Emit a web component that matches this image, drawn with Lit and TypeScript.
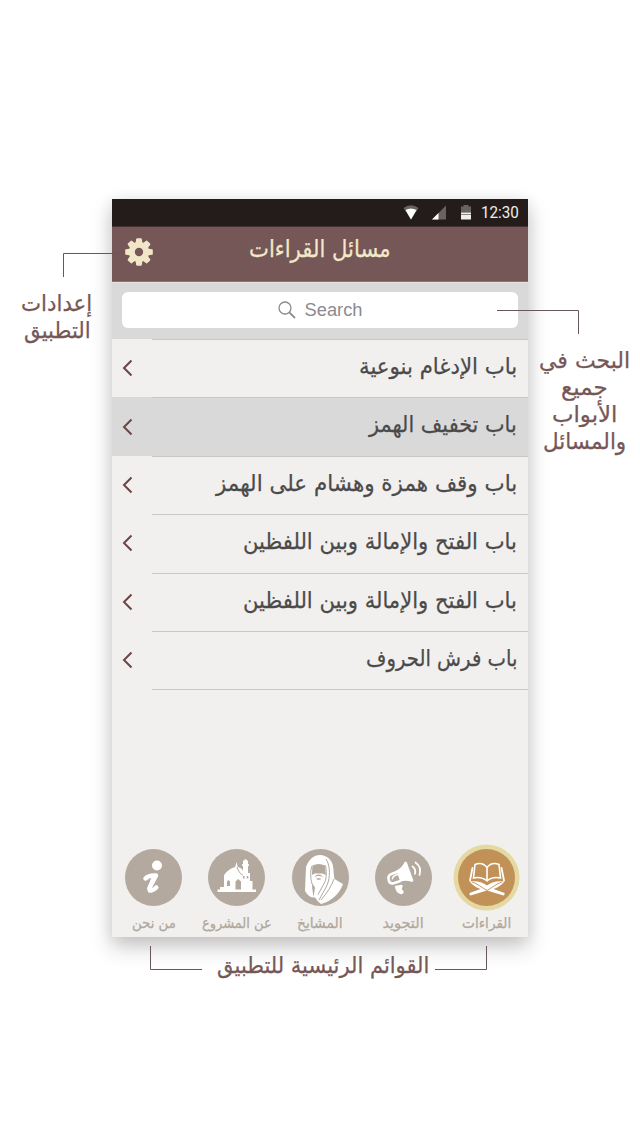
import { LitElement, html, css, svg } from "lit";
import { customElement, property } from "lit/decorators.js";
import { classMap } from "lit/directives/class-map.js";

/** One line of Arabic text condensed horizontally to a given width. */
@customElement("fit-label")
class FitLabel extends LitElement {
  @property({ type: Number }) w = 100;
  @property() text = "";

  static styles = css`
    :host { display: block; direction: rtl; white-space: nowrap; text-align: right; }
    .line { display: inline-block; transform-origin: 100% 50%; }
  `;

  updated() {
    const line = this.renderRoot.querySelector(".line") as HTMLElement;
    this.style.width = `${this.w}px`;
    line.style.transform = `scaleX(${this.w / (line.offsetWidth || this.w)})`;
  }

  render() {
    return html`<span class="line">${this.text}</span>`;
  }
}

const rows = [
  { text: "باب الإدغام بنوعية", w: 158 },
  { text: "باب تخفيف الهمز", w: 148, active: true },
  { text: "باب وقف همزة وهشام على الهمز", w: 301 },
  { text: "باب الفتح والإمالة وبين اللفظين", w: 274 },
  { text: "باب الفتح والإمالة وبين اللفظين", w: 274 },
  { text: "باب فرش الحروف", w: 151 },
];

const icons = {
  info: svg`
    <circle cx="32" cy="16.500" r="5"/>
    <path class="fat" d="M20.500 29.500c2.500-2.500 5.500-3.500 10.500-3l-5.500 10.500c-1.600 3-1.200 4.800.8 4.500 2-.3 3.500-1.500 5-3"/>
    <path d="M27 27l6-1-6 12-5 2z"/>`,
  mosque: svg`
    <path d="M9.500 40.500h38.500v2.500H9.500zM12 38h32v3H12z"/>
    <path d="M16 38.500V26.500c2-4 7-7.500 11.200-8.500l1.300-5 1.300 5c4 1 6 4 6.200 7v13.500z"/>
    <path d="M35 25v-8h-1v-1.800h1V12l2.500-2 2.500 2v3.200h1V17h-1v7h2v8h2.500v8H32V25z"/>
    <path class="cut" d="M27.500 40.500v-8l2.500-2.500 3 2.500v8zM19 37v-4.500l1.500-1.500 1.500 1.500V37zM35 27h1.600v2.500H35zM38.700 27h1.600v2.500h-1.600z"/>
    <path class="cutline" d="M29 18c1 4 3 6.500 6 8.500"/>`,
  sheikh: svg`
    <path d="M13 42l1-24C17 10 22 6 28 6c7 0 12 5 13 11 .8 5 .6 9 1.500 13l8.500 5c-3 9-11 17-22 20-3-2-4-4-6-6.500-4 .5-7-1.500-10-6.500z"/>
    <path class="cut" d="M20.500 16.500c4-2 8.500-2 12.500 0l.8 9.500-3.300-1.500h-7.500L19.800 26z"/>
    <path class="cut" d="M22.500 28.500c1.200-4 7.200-4 8.500 0-1.500-1.200-2.500-1.500-4.200-1.500s-2.800.3-4.300 1.500z"/>
    <path class="cut" d="M24.500 29.200h4.500l-.8 1.600h-3z"/>
    <path class="cut" d="M20 34l3 4.500-1.500 9.500-1.300-9z"/>
    <path class="cutline" d="M20 17c-2 5-1.500 12 0 18M33.500 16.500c1.500 8 1 15-2.500 20l-5 9M34 10c4 6 4 15 2.500 22-2 7-6 12-9.500 19M42 30c-3 8-7 14-13 21"/>`,
  horn: svg`
    <path d="M21.500 21.500c3.500-1.500 6-4.500 8-8.200.7-1.200 2-1 2.400.2l6.300 17.500c.4 1.400-.6 2.200-2 1.700-3.500-1.400-7-1.500-11 .1z"/>
    <path class="stroke3" d="M23 22.500l-7 2.700c-4.500 2.300-2.500 10.300 2.500 9l7-2.200"/>
    <path class="stroke2" d="M17.500 29.500c0-2 2-3 5-4"/>
    <path d="M19.800 37l6.500-1.200c1.200 0 1.700 1 1.200 2l-.8 2.200 2 2.500c.2 2.300-2.200 3.200-4.200 2.300-2.500-1.200-4.200-3.800-4.700-7.800z"/>
    <path class="stroke2" d="M37.500 17.500c2.500 1.800 3.200 4.500 2.400 7.300M40.500 13.500c4 2.800 5.500 7.500 4 12.500"/>`,
  quran: svg`
    <path class="stroke15" d="M29 18.500c-3.500-4.500-8.500-4.500-12-3L15.500 29c5-1 9.500-.5 13.500 3 4-3.500 8.500-4 13.500-3L41 15.500c-3.500-1.500-8.500-1.500-12 3zM29 18.500v13"/>
    <path class="stroke2" d="M14.500 19l-2.500 12.500M43.500 19l2.500 12.500"/>
    <path d="M11.500 32.500c6-1 13 0 17.500 4 4.500-4 11.500-5 17.500-4-3 3.500-6.500 6-11 7.500l11 4v1.800l-1 .7L29 41.500l-16.500 5-1-.7V44l11-4c-4.500-1.500-8-4-11-7.500z"/>
    <path class="thincut" d="M14 33c6 2 9 5 15 8.500M44 33c-6 2-9 5-15 8.500"/>`,
};

const tabs = [
  { text: "من نحن", w: 44, icon: icons.info },
  { text: "عن المشروع", w: 70, icon: icons.mosque },
  { text: "المشايخ", w: 46, icon: icons.sheikh },
  { text: "التجويد", w: 41, icon: icons.horn },
  { text: "القراءات", w: 49, icon: icons.quran, active: true },
];

@customElement("app-root")
class AppRoot extends LitElement {
  static styles = css`
    :host {
      display: block; position: relative; width: 640px; height: 1136px; overflow: hidden;
      background: #fff; font-family: "DejaVu Sans", sans-serif; color: #765757;
    }
    fit-label { -webkit-text-stroke: 0.25px currentColor; }
    .board { display: grid; grid-template-columns: 112px 416px 112px; padding-top: 199px; }
    .note { display: flex; flex-direction: column; align-items: center; font-size: 22.500px; line-height: 27px; }
    .note-left { padding-top: 91px; padding-left: 2px; }
    .note-right { padding-top: 148px; padding-left: 1px; }
    .note-bottom { display: flex; justify-content: center; padding: 15px 0 0 7px; font-size: 22.500px; line-height: 27px; }

    .phone {
      height: 738px; box-sizing: border-box; display: flex; flex-direction: column; background: #f1f0ee;
      box-shadow: 0 10px 20px rgba(40, 30, 30, 0.24), 0 2px 14px rgba(40, 30, 30, 0.09);
    }
    .status {
      height: 28px; box-sizing: border-box; background: #241c1a; border-bottom: 1px solid #43302f;
      display: flex; align-items: center; justify-content: flex-end; padding-right: 9.500px;
      color: #eee; font: 16px/27px Roboto, sans-serif;
    }
    .time { width: 38px; }
    .time span { display: inline-block; transform: scaleX(0.95); transform-origin: 100% 50%; margin-left: -2px; }
    .status-icons { width: 70px; height: 27px; margin-right: 8px; }
    .header {
      height: 55px; box-sizing: border-box; background: #755757; border-bottom: 1px solid #8f7372;
      display: flex; align-items: center; color: #f3e8c9;
    }
    .gear { width: 28px; height: 28px; margin: -4px 0 0 12.500px; }
    .title { margin: -11px 0 0 96.500px; font-size: 24px; line-height: 32px; }
    .search { height: 57px; box-sizing: border-box; background: #d9d9d9; padding: 9px 10px 0; border-top: 1px solid #e3e3e3; }
    .field {
      height: 36px; border-radius: 6px; background: #fff; display: flex; align-items: center;
      justify-content: center; gap: 9px; color: #8b8b90; font: 18.300px "Liberation Sans", sans-serif;
    }
    .lens { width: 18px; height: 18px; }
    .row { height: 58.400px; box-sizing: border-box; display: flex; }
    .row.active { background: #d9d9d9; }
    .side { width: 40px; display: flex; align-items: center; padding-left: 10px; box-sizing: border-box; }
    .chev { width: 11px; height: 18px; }
    .main {
      flex: 1; display: flex; justify-content: flex-start; direction: rtl; box-sizing: border-box;
      border-top: 1.500px solid #cbc7c4; padding: 9px 11px 0; color: #4b4a4a; font-size: 22.500px; line-height: 34px;
    }
    .last { margin-left: 40px; border-top: 1.500px solid #cbc7c4; flex: 1; }
    .tabs { display: flex; height: 94px; }
    .tab { width: 83.400px; display: flex; flex-direction: column; align-items: center; color: #b0a79c; font-size: 14.500px; line-height: 18px; }
    .disc { width: 57px; height: 57px; margin: 6px 0 8px; border-radius: 50%; background: #b3a99e; }
    .tab.active .disc { background: #c19158; box-shadow: 0 0 0 4.500px #e3d9a1; }
    .glyph { display: block; width: 57px; height: 57px; fill: #fff; }
    .cut { fill: #b3a99e; }
    .cutline { fill: none; stroke: #b3a99e; stroke-width: 1; }
    .thincut { fill: none; stroke: #c19158; stroke-width: 0.9; }
    .fat { fill: none; stroke: #fff; stroke-width: 4.500; stroke-linecap: round; stroke-linejoin: round; }
    .stroke15 { fill: none; stroke: #fff; stroke-width: 1.600; }
    .stroke2 { fill: none; stroke: #fff; stroke-width: 1.800; stroke-linecap: round; }
    .stroke3 { fill: none; stroke: #fff; stroke-width: 2.600; stroke-linejoin: round; }
    .leaders { position: absolute; inset: 0; width: 640px; height: 1136px; fill: none; stroke: #64585a; stroke-width: 1; }
  `;

  gear() {
    const teeth = [0, 45, 90, 135, 180, 225, 270, 315];
    return html`<svg class="gear" viewBox="-14 -14 28 28" fill="#f2e6c8">
      ${teeth.map((a) => svg`<path transform="rotate(${a})" d="M-3.600 -8L-2.800 -13q.1-.8.9-.8h3.800q.8 0 .9.8L3.600 -8z"/>`)}
      <circle r="7.200" fill="none" stroke="#f2e6c8" stroke-width="6"/>
    </svg>`;
  }

  render() {
    return html`
      <div class="board">
        <div class="note note-left">
          <fit-label .w=${71} .text=${"إعدادات"}></fit-label>
          <fit-label .w=${67} .text=${"التطبيق"}></fit-label>
        </div>
        <div class="phone">
          <div class="status">
            <svg class="status-icons" viewBox="0 0 70 27">
              <path d="M.5 9q7.500-5.500 15 0L8 20.500z" fill="#686261"/>
              <path d="M2.500 11q5.500-3 11 0L8 20.500z" fill="#fff"/>
              <path d="M43 6.500v14H29z" fill="#686261"/>
              <path d="M35.500 14v6.500H29z" fill="#fff"/>
              <path d="M60.500 6h5v1.500h2.500v6h-10v-6h2.500z" fill="#686261"/>
              <path d="M58 13.500h10v2H58zM58 16h10v4.500H58z" fill="#eee"/>
            </svg>
            <div class="time"><span>12:30</span></div>
          </div>
          <div class="header">
            ${this.gear()}
            <fit-label class="title" .w=${142} .text=${"مسائل القراءات"}></fit-label>
          </div>
          <div class="search">
            <div class="field">
              <svg class="lens" viewBox="0 0 18 18" fill="none" stroke="#8b8b90" stroke-width="1.300">
                <circle cx="7" cy="7" r="6"/><path d="M11.300 11.300l5.700 5.700" stroke-width="1.800"/>
              </svg>
              <span>Search</span>
            </div>
          </div>
          ${rows.map((r) => html`
            <div class=${classMap({ row: true, active: !!r.active })}>
              <div class="side">
                <svg class="chev" viewBox="0 0 11 18" fill="none" stroke="#6b4545" stroke-width="2">
                  <path d="M9.500 1.500L2 9l7.500 7.500"/>
                </svg>
              </div>
              <div class="main"><fit-label .w=${r.w} .text=${r.text}></fit-label></div>
            </div>`)}
          <div class="last"></div>
          <div class="tabs">
            ${tabs.map((t) => html`
              <div class=${classMap({ tab: true, active: !!t.active })}>
                <div class="disc"><svg class="glyph" viewBox="0 0 57 57">${t.icon}</svg></div>
                <fit-label .w=${t.w} .text=${t.text}></fit-label>
              </div>`)}
          </div>
        </div>
        <div class="note note-right">
          <fit-label .w=${91} .text=${"البحث في"}></fit-label>
          <fit-label .w=${47} .text=${"جميع"}></fit-label>
          <fit-label .w=${65} .text=${"الأبواب"}></fit-label>
          <fit-label .w=${83} .text=${"والمسائل"}></fit-label>
        </div>
      </div>
      <div class="note-bottom">
        <fit-label .w=${212} .text=${"القوائم الرئيسية للتطبيق"}></fit-label>
      </div>
      <svg class="leaders" viewBox="0 0 640 1136">
        <path d="M119 253.500H63.500V277M497 310.500h81.500V334M150.500 946v23.500H202M486.500 946v23.500H435"/>
      </svg>`;
  }
}
